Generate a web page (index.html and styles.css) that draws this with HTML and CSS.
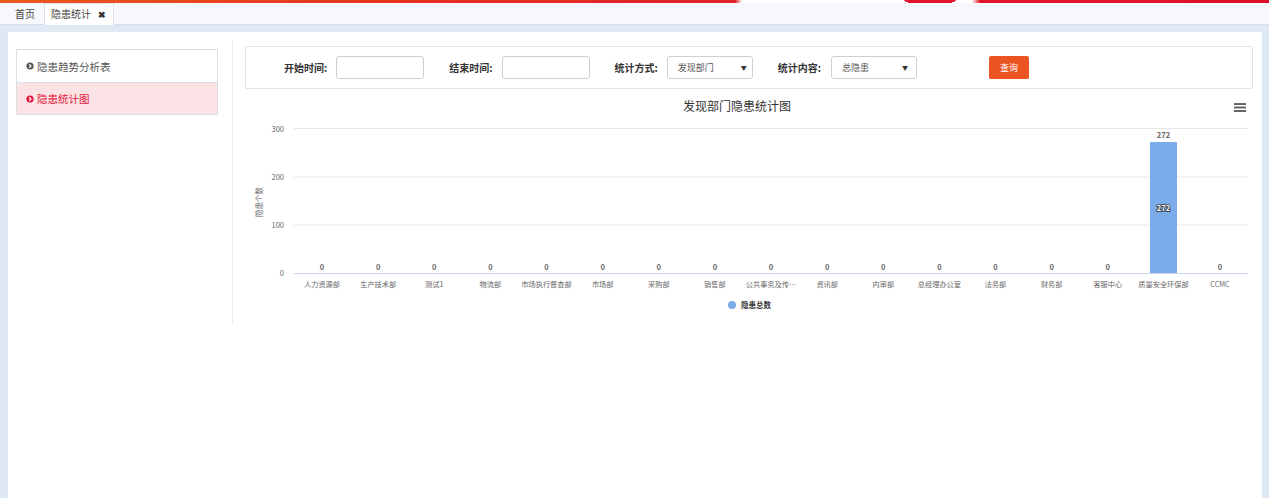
FILE: index.html
```html
<!DOCTYPE html>
<html lang="zh-CN">
<head>
<meta charset="utf-8">
<title>隐患统计</title>
<link rel="stylesheet" href="styles.css">
</head>
<body>
<div class="top-stripe"></div>
<div class="tabbar">
  <span class="tab">首页</span>
  <span class="tab tab-active">隐患统计 <span class="tab-close">✖</span></span>
</div>
<div class="page">
  <div class="panel">
    <ul class="side-menu">
      <li class="side-item">
        <svg class="side-icon" viewBox="0 0 10 10"><circle cx="5" cy="5" r="4.5" fill="#555"/><path d="M4 2.8 L6.2 5 L4 7.2" stroke="#fff" stroke-width="1.5" fill="none"/></svg>
        隐患趋势分析表
      </li>
      <li class="side-item side-item-active">
        <svg class="side-icon" viewBox="0 0 10 10"><circle cx="5" cy="5" r="4.5" fill="#e4163a"/><path d="M4 2.8 L6.2 5 L4 7.2" stroke="#fff" stroke-width="1.5" fill="none"/></svg>
        隐患统计图
      </li>
    </ul>
    <div class="main">
      <div class="filter">
        <label class="f-label f-first">开始时间:</label>
        <div class="f-input"></div>
        <label class="f-label">结束时间:</label>
        <div class="f-input"></div>
        <label class="f-label">统计方式:</label>
        <div class="f-select"><span>发现部门</span><span class="caret">▼</span></div>
        <label class="f-label f-after-select">统计内容:</label>
        <div class="f-select f-select2"><span>总隐患</span><span class="caret">▼</span></div>
        <button class="btn-query">查询</button>
      </div>
      <div class="chart">
        <svg class="chart-svg" width="1008" height="225" viewBox="0 0 1008 225">
          <text x="492" y="17" class="c-title" text-anchor="middle">发现部门隐患统计图</text>
          <g class="menu-icon">
            <rect x="989" y="9" width="12" height="2" fill="#666"/>
            <rect x="989" y="12.5" width="12" height="2" fill="#666"/>
            <rect x="989" y="16" width="12" height="2" fill="#666"/>
          </g>
          <g class="grid">
            <line x1="49" x2="1003" y1="34.5" y2="34.5"/>
            <line x1="49" x2="1003" y1="83" y2="83"/>
            <line x1="49" x2="1003" y1="131" y2="131"/>
          </g>
          <line x1="49" x2="1003" y1="179.5" y2="179.5" class="axis"/>
          <g class="y-labels" text-anchor="end">
            <text x="39" y="38">300</text>
            <text x="39" y="86">200</text>
            <text x="39" y="134">100</text>
            <text x="39" y="182">0</text>
          </g>
          <text class="y-title" transform="translate(17,108) rotate(-90)" text-anchor="middle">隐患个数</text>
          <rect x="905" y="48" width="27" height="131" fill="#7cabea"/>
          <g class="v-labels" text-anchor="middle">
            <text x="77" y="176">0</text>
            <text x="133.2" y="176">0</text>
            <text x="189.3" y="176">0</text>
            <text x="245.4" y="176">0</text>
            <text x="301.5" y="176">0</text>
            <text x="357.7" y="176">0</text>
            <text x="413.8" y="176">0</text>
            <text x="469.9" y="176">0</text>
            <text x="526" y="176">0</text>
            <text x="582.2" y="176">0</text>
            <text x="638.3" y="176">0</text>
            <text x="694.4" y="176">0</text>
            <text x="750.5" y="176">0</text>
            <text x="806.7" y="176">0</text>
            <text x="862.8" y="176">0</text>
            <text x="918.5" y="44">272</text>
            <text x="975" y="176">0</text>
          </g>
          <text x="918.5" y="117" text-anchor="middle" class="in-label">272</text>
          <g class="x-labels" text-anchor="middle">
            <text x="77" y="193">人力资源部</text>
            <text x="133.2" y="193">生产技术部</text>
            <text x="189.3" y="193">测试1</text>
            <text x="245.4" y="193">物流部</text>
            <text x="301.5" y="193">市场执行督查部</text>
            <text x="357.7" y="193">市场部</text>
            <text x="413.8" y="193">采购部</text>
            <text x="469.9" y="193">销售部</text>
            <text x="526" y="193">公共事务及传…</text>
            <text x="582.2" y="193">资讯部</text>
            <text x="638.3" y="193">内审部</text>
            <text x="694.4" y="193">总经理办公室</text>
            <text x="750.5" y="193">法务部</text>
            <text x="806.7" y="193">财务部</text>
            <text x="862.8" y="193">客服中心</text>
            <text x="918.5" y="193">质量安全环保部</text>
            <text x="975" y="193">CCMC</text>
          </g>
          <circle cx="487" cy="211" r="4" fill="#7cabea"/>
          <text x="496" y="214" class="legend">隐患总数</text>
        </svg>
      </div>
    </div>
  </div>
</div>
</body>
</html>
```

FILE: styles.css
```css
* { box-sizing: border-box; }
html, body {
  margin: 0;
  padding: 0;
  height: 100%;
}
body {
  font-family: "Noto Sans CJK SC", "Liberation Sans", sans-serif;
  background: #dfe9f3;
  color: #333;
  overflow: hidden;
}
.top-stripe {
  height: 3px;
  background:
    radial-gradient(ellipse 26px 5px at 930px 0, #e31530 98%, transparent 100%),
    linear-gradient(to right, #ea5a1f 0, #e6321f 400px, #e2202b 735px, #ffffff 742px, #ffffff 972px, #e3152c 980px, #e0122a 100%);
}
.tabbar {
  height: 22px;
  background: #f7f8fc;
  border-bottom: 1px solid #d7dee6;
  display: flex;
  align-items: flex-end;
  padding-left: 6px;
}
.tab {
  font-size: 10px;
  line-height: 19px;
  height: 21px;
  padding: 0 8px;
  color: #444;
  border: 1px solid transparent;
  border-bottom: none;
}
.tab-active {
  background: #fff;
  border-color: #dfe3e8;
  padding: 0 6px 0 6px;
  margin-left: 0;
  margin-bottom: -1px;
  height: 22px;
  width: 70px;
}
.tab-close {
  font-size: 9px;
  font-weight: bold;
  color: #333;
  margin-left: 5px;
}
.page {
  padding: 7px 7px 0 8px;
  height: calc(100% - 25px);
}
.panel {
  background: #fff;
  height: 100%;
  display: flex;
  align-items: flex-start;
}
.side-menu {
  list-style: none;
  margin: 17px 0 0 8px;
  padding: 0;
  width: 202px;
  border: 1px solid #dcdfe3;
}
.side-item {
  height: 32px;
  display: flex;
  align-items: center;
  padding-left: 9px;
  font-size: 10.5px;
  color: #555;
}
.side-item + .side-item {
  border-top: 1px solid #dcdfe3;
}
.side-item-active {
  background: #fbe2e4;
  color: #e4163a;
}
.side-icon {
  width: 8px;
  height: 8px;
  margin-right: 3px;
}
.main {
  margin: 8px 0 0 14px;
  border-left: 1px solid #ececec;
  flex: 1;
  padding: 6px 9px 5px 12px;
}
.filter {
  height: 43px;
  border: 1px solid #e2e2e2;
  border-radius: 2px;
  display: flex;
  align-items: center;
  padding-left: 38px;
}
.f-label {
  font-size: 10px;
  font-weight: bold;
  color: #333;
  margin-left: 25px;
  margin-right: 9px;
  line-height: 14px;
}
.f-first { margin-left: 0; }
.f-after-select { margin-left: 25px; margin-right: 10px; }
.f-input {
  width: 88px;
  height: 23px;
  border: 1px solid #cfcfcf;
  border-radius: 3px;
}
.f-select {
  width: 86px;
  height: 23px;
  border: 1px solid #cfcfcf;
  border-radius: 3px;
  display: flex;
  align-items: center;
  justify-content: space-between;
  padding: 0 5px 0 10px;
  font-size: 9px;
  color: #555;
}
.f-select2 {
  width: 86px;
  padding-left: 10px;
  padding-right: 8px;
}
.caret {
  font-size: 6px;
  color: #333;
}
.btn-query {
  margin-left: 72px;
  width: 40px;
  height: 23px;
  border: none;
  border-radius: 2px;
  background: #ea5420;
  color: #fff;
  font-family: "Noto Sans CJK SC", "Liberation Sans", sans-serif;
  font-size: 9px;
  padding: 0;
}
.chart {
  margin-top: 5px;
}
.chart-svg {
  display: block;
  font-family: "Noto Sans CJK SC", "Liberation Sans", sans-serif;
}
.c-title {
  font-size: 12px;
  fill: #333;
}
.grid line {
  stroke: #e6e6e6;
  stroke-width: 1;
}
.axis {
  stroke: #ccd6eb;
  stroke-width: 1;
}
.y-labels text {
  font-size: 7.5px;
  fill: #666;
}
.y-title {
  font-size: 7.5px;
  fill: #666;
}
.v-labels text {
  font-size: 7.5px;
  font-weight: bold;
  fill: #666;
}
.in-label {
  font-size: 7.5px;
  font-weight: bold;
  fill: #fff;
  stroke: #333;
  stroke-width: 1.6px;
  paint-order: stroke;
}
.x-labels text {
  font-size: 7.2px;
  fill: #666;
}
.legend {
  font-size: 7.5px;
  font-weight: bold;
  fill: #333;
}
```
